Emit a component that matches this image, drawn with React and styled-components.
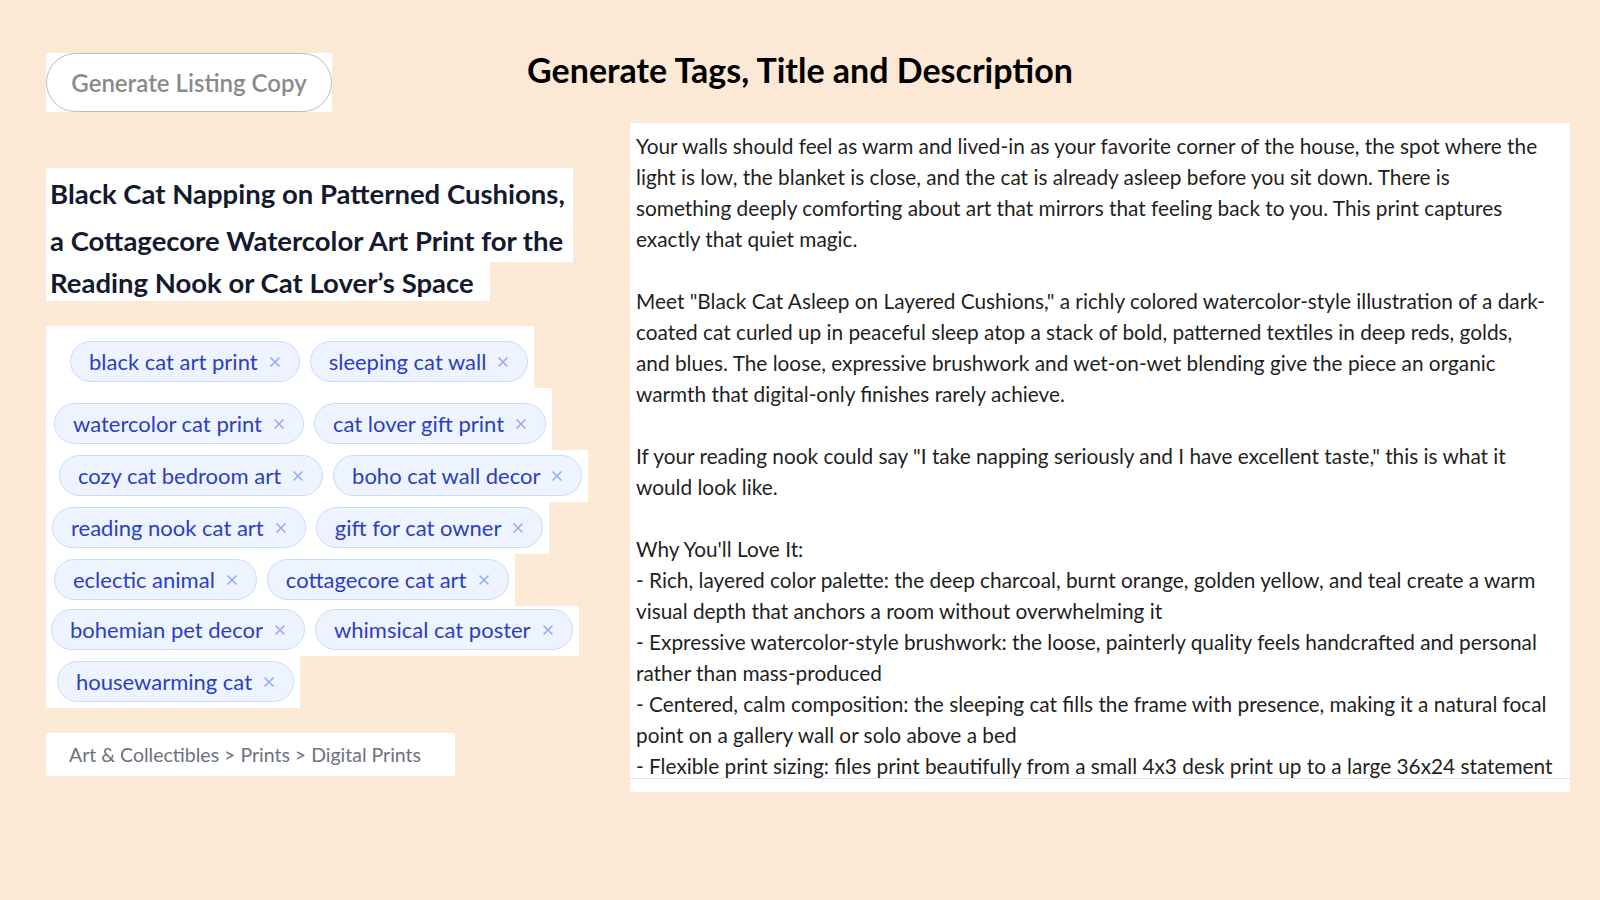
import React from 'react';
import styled, { createGlobalStyle } from 'styled-components';

const GlobalStyle = createGlobalStyle`
  html, body {
    margin: 0;
    padding: 0;
    background: #fce9d5;
  }
  body {
    font-family: Lato, 'Liberation Sans', sans-serif;
  }
`;

const Page = styled.div`
  width: 1600px;
  height: 900px;
  background: #fce9d5;
  overflow: hidden;
`;

const Header = styled.div`
  display: grid;
  grid-template-columns: 1fr auto 1fr;
  align-items: start;
  padding-top: 53px;
`;

const ButtonWrap = styled.div`
  justify-self: start;
  margin-left: 46px;
  background: #ffffff;
`;

const GenerateButton = styled.button`
  display: flex;
  align-items: center;
  justify-content: center;
  width: 286px;
  height: 59px;
  background: #ffffff;
  border: 1px solid #bdbdbd;
  border-radius: 30px;
  font-family: Lato, 'Liberation Sans', sans-serif;
  font-size: 24px;
  font-weight: 600;
  color: #8a8a8a;
  cursor: pointer;
`;

const Heading = styled.h1`
  margin: 0;
  font-size: 34px;
  line-height: 34px;
  font-weight: 700;
  color: #000000;
`;

const Body = styled.div`
  display: flex;
  align-items: flex-start;
  padding-left: 46px;
  margin-top: 11px;
`;

const LeftColumn = styled.div`
  width: 584px;
  display: flex;
  flex-direction: column;
  align-items: flex-start;
  padding-top: 45px;
`;

const Title = styled.div`
  display: flex;
  flex-direction: column;
  align-items: flex-start;
`;

const TitleLine = styled.div`
  width: ${(p) => p.$width}px;
  height: ${(p) => p.$height}px;
  box-sizing: border-box;
  padding: 3px 0 0 4px;
  background: #ffffff;
  font-size: 27.5px;
  font-weight: 700;
  line-height: ${(p) => p.$height - 3}px;
  color: #141a2e;
  white-space: nowrap;
`;

const Tags = styled.div`
  display: flex;
  flex-direction: column;
  align-items: flex-start;
  margin-top: 25px;
`;

const TagRow = styled.div`
  display: flex;
  gap: 10px;
  background: #ffffff;
  padding: ${(p) => p.$top}px 6px 6px ${(p) => p.$left}px;
`;

const Tag = styled.span`
  display: inline-flex;
  align-items: center;
  gap: 11px;
  height: 41px;
  box-sizing: border-box;
  padding: 0 18px;
  border: 1px solid #c9dbfb;
  border-radius: 999px;
  background: #edf4ff;
  font-size: 22px;
  color: #2c3fbf;
  white-space: nowrap;
`;

const RemoveIcon = styled.svg`
  width: 12px;
  height: 12px;
  flex: none;
  stroke: #93adf3;
  stroke-width: 1.6;
`;

const Breadcrumb = styled.div`
  margin-top: 25px;
  height: 43px;
  display: flex;
  align-items: center;
  padding: 0 34px 0 23px;
  background: #ffffff;
  font-size: 19.5px;
  color: #6b7280;
`;

const DescriptionPanel = styled.div`
  width: 940px;
  background: #ffffff;
  padding-bottom: 13px;
`;

const DescriptionText = styled.div`
  height: 656px;
  box-sizing: border-box;
  overflow: hidden;
  padding: 7px 6px 0;
  border-bottom: 1px solid #e2e2e2;
  font-size: 20.8px;
  line-height: 31px;
  color: #1f1f1f;
  white-space: pre;
`;

const titleLines = [
  { text: 'Black Cat Napping on Patterned Cushions,', width: 527, height: 48 },
  { text: 'a Cottagecore Watercolor Art Print for the', width: 527, height: 46 },
  { text: 'Reading Nook or Cat Lover\u2019s Space', width: 444, height: 39 },
];

const tagRows = [
  { top: 15, left: 24, tags: ['black cat art print', 'sleeping cat wall'] },
  { top: 15, left: 8, tags: ['watercolor cat print', 'cat lover gift print'] },
  { top: 5, left: 13, tags: ['cozy cat bedroom art', 'boho cat wall decor'] },
  { top: 5, left: 6, tags: ['reading nook cat art', 'gift for cat owner'] },
  { top: 5, left: 8, tags: ['eclectic animal', 'cottagecore cat art'] },
  { top: 3, left: 5, tags: ['bohemian pet decor', 'whimsical cat poster'] },
  { top: 5, left: 11, tags: ['housewarming cat'] },
];

const description = [
  'Your walls should feel as warm and lived-in as your favorite corner of the house, the spot where the',
  'light is low, the blanket is close, and the cat is already asleep before you sit down. There is',
  'something deeply comforting about art that mirrors that feeling back to you. This print captures',
  'exactly that quiet magic.',
  '',
  'Meet "Black Cat Asleep on Layered Cushions," a richly colored watercolor-style illustration of a dark-',
  'coated cat curled up in peaceful sleep atop a stack of bold, patterned textiles in deep reds, golds,',
  'and blues. The loose, expressive brushwork and wet-on-wet blending give the piece an organic',
  'warmth that digital-only finishes rarely achieve.',
  '',
  'If your reading nook could say "I take napping seriously and I have excellent taste," this is what it',
  'would look like.',
  '',
  "Why You'll Love It:",
  '- Rich, layered color palette: the deep charcoal, burnt orange, golden yellow, and teal create a warm',
  'visual depth that anchors a room without overwhelming it',
  '- Expressive watercolor-style brushwork: the loose, painterly quality feels handcrafted and personal',
  'rather than mass-produced',
  '- Centered, calm composition: the sleeping cat fills the frame with presence, making it a natural focal',
  'point on a gallery wall or solo above a bed',
  '- Flexible print sizing: files print beautifully from a small 4x3 desk print up to a large 36x24 statement',
].join('\n');

const App = () => {
  return (
    <Page>
      <GlobalStyle />
      <Header>
        <ButtonWrap>
          <GenerateButton>Generate Listing Copy</GenerateButton>
        </ButtonWrap>
        <Heading>Generate Tags, Title and Description</Heading>
      </Header>
      <Body>
        <LeftColumn>
          <Title>
            {titleLines.map((line) => (
              <TitleLine key={line.text} $width={line.width} $height={line.height}>
                {line.text}
              </TitleLine>
            ))}
          </Title>
          <Tags>
            {tagRows.map((row, i) => (
              <TagRow key={i} $top={row.top} $left={row.left}>
                {row.tags.map((tag) => (
                  <Tag key={tag}>
                    {tag}
                    <RemoveIcon viewBox="0 0 12 12" fill="none">
                      <path d="M1.5 1.5L10.5 10.5M10.5 1.5L1.5 10.5" />
                    </RemoveIcon>
                  </Tag>
                ))}
              </TagRow>
            ))}
          </Tags>
          <Breadcrumb>Art &amp; Collectibles &gt; Prints &gt; Digital Prints</Breadcrumb>
        </LeftColumn>
        <DescriptionPanel>
          <DescriptionText>{description}</DescriptionText>
        </DescriptionPanel>
      </Body>
    </Page>
  );
};

export default App;
